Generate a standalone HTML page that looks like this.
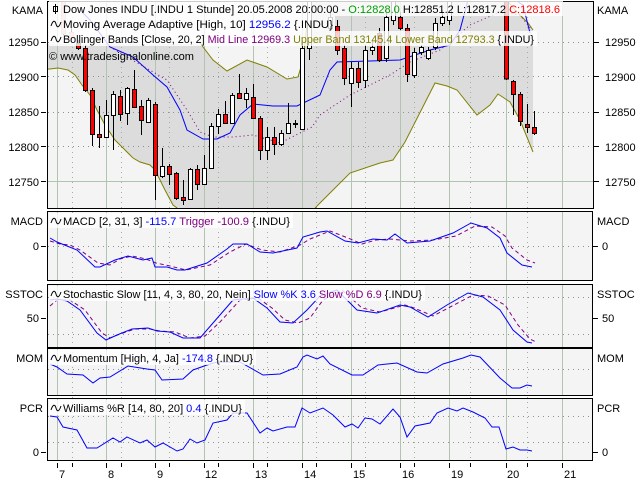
<!DOCTYPE html>
<html><head><meta charset="utf-8"><style>
html,body{margin:0;padding:0;background:#fff;width:640px;height:480px;overflow:hidden}
svg{display:block;font-family:"Liberation Sans",sans-serif;font-size:11px}
</style></head><body>
<svg width="640" height="480" viewBox="0 0 640 480" xmlns="http://www.w3.org/2000/svg">
<defs>
<clipPath id="cm"><rect x="48" y="2" width="545" height="206"/></clipPath>
</defs>
<rect x="47.5" y="1.5" width="546" height="207" fill="#f4f4f4"/>
<rect x="47.5" y="211.5" width="545" height="69" fill="#f4f4f4"/>
<rect x="47.5" y="284.5" width="545" height="63" fill="#f4f4f4"/>
<rect x="47.5" y="348.5" width="545" height="47" fill="#f4f4f4"/>
<rect x="47.5" y="398.5" width="545" height="62" fill="#f4f4f4"/>

<g clip-path="url(#cm)">
<polygon fill="#dcdcdc" points="48,44 200,44 213,60 227,71 247,60 267,67 287,79 298,77 303,60 310,0 500,0 515,10 528,23 533,30 533,152 520,120 510,102 498,94 490,105 477,115 457,90 447,86 435,83 405,142 393,160 380,163 350,173 320,203 313,208 180,208 173,205 165,190 155,170 150,165 140,162 133,158 125,150 115,140 105,125 97,110 90,95 82,85 75,75 68,70 58,68 50,69 48,69"/>
</g>

<g stroke="#b0c4b0" stroke-width="1">
<path d="M57.5 2V208M106.5 2V208M155.5 2V208M204.5 2V208M253.5 2V208M302.5 2V208M351.5 2V208M400.5 2V208M449.5 2V208M506.5 2V208M562.5 2V208"/>
<path d="M57.5 212V280M106.5 212V280M155.5 212V280M204.5 212V280M253.5 212V280M302.5 212V280M351.5 212V280M400.5 212V280M449.5 212V280M506.5 212V280M562.5 212V280"/>
<path d="M57.5 285V347M106.5 285V347M155.5 285V347M204.5 285V347M253.5 285V347M302.5 285V347M351.5 285V347M400.5 285V347M449.5 285V347M506.5 285V347M562.5 285V347"/>
<path d="M57.5 349V395M106.5 349V395M155.5 349V395M204.5 349V395M253.5 349V395M302.5 349V395M351.5 349V395M400.5 349V395M449.5 349V395M506.5 349V395M562.5 349V395"/>
<path d="M57.5 399V460M106.5 399V460M155.5 399V460M204.5 399V460M253.5 399V460M302.5 399V460M351.5 399V460M400.5 399V460M449.5 399V460M506.5 399V460M562.5 399V460"/>
<path d="M48 181.5H593"/>
</g>
<g stroke="#a0b0a0" stroke-width="1" stroke-dasharray="1,4">
<path d="M72.5 2V460M121.5 2V460M169.5 2V460M218.5 2V460M267.5 2V460M316.5 2V460M365.5 2V460M414.5 2V460M470.5 2V460M527.5 2V460"/>
</g>
<g stroke="#909090" stroke-width="1" stroke-dasharray="1,4">
<path d="M48 42.5H593M48 76.5H593M48 112.5H593M48 146.5H593"/>
<path d="M48 246.5H592"/>
<path d="M48 297.5H592M48 334.5H592"/>
<path d="M48 369.5H592"/>
<path d="M48 416.5H592M48 442.5H592"/>
</g>

<g clip-path="url(#cm)">
<polyline fill="none" stroke="#808000" points="48,69 50,69 58,68 68,70 75,75 82,85 90,95 97,110 105,125 115,140 125,150 133,158 140,162 150,165 155,170 165,190 173,205 180,210"/>
<polyline fill="none" stroke="#808000" points="313,210 320,203 350,173 380,163 393,160 405,142 435,83 447,86 457,90 477,115 490,105 498,94 510,102 520,120 533,152"/>
<polyline fill="none" stroke="#808000" points="200,43 213,60 227,71 247,60 267,67 287,79 298,77 303,60 310,-2"/>
<polyline fill="none" stroke="#808000" points="505,-2 515,10 528,23 533,30"/>
<polyline fill="none" stroke="#0000ff" points="80,10 90,20 110,47 133,57 153,75 167,87 180,110 187,130 203,139 217,139 230,133 240,115 253,104 273,106 297,106 320,95 330,70 337,62 400,60 430,50 450,45 460,30 468,0"/>
<polyline fill="none" stroke="#0000ff" points="515,0 523,5 530,33"/>
<polyline fill="none" stroke="#800080" stroke-dasharray="1,3" points="110,47 167,80 187,110 200,132 213,137 233,137 253,135 280,143 300,133 312,127 320,115 350,95 390,75 410,62 440,50 470,25 500,12 520,15 532,30"/>
<g stroke="#000" stroke-width="1">
<path d="M63.5 0V35M71.5 28V40M78.5 40V50M85.5 45V92M92.5 88V146M99.5 106V148M106.5 100V138M113.5 91V150M120.5 90V121M127.5 87V125M134.5 70V108M141.5 100V135M148.5 98V123M155.5 102V200M162.5 148V178M169.5 164V185M176.5 172V200M183.5 180V205M190.5 168V200M197.5 165V190M204.5 155V185M211.5 123V169M218.5 109V134M225.5 101V124M232.5 93V124M239.5 74V99M246.5 88V108M253.5 84V119M260.5 116V160M267.5 127V160M274.5 127V155M281.5 130V146M288.5 103V134M295.5 120V128M302.5 40V130M309.5 0V60M330.5 10V30M337.5 20V55M344.5 45V85M351.5 62V107M358.5 62V88M365.5 45V88M372.5 40V55M379.5 28V62M386.5 10V62M393.5 0V25M400.5 12V30M407.5 24V82M414.5 48V78M421.5 45V55M428.5 47V60M435.5 18V50M442.5 10V26M449.5 0V25M506.5 0V80M513.5 80V115M520.5 92V126M527.5 104V133M534.5 111V135"/>
</g>
<g stroke="#000" stroke-width="1" fill="#ff0000">
<rect x="61.5" y="0.5" width="4" height="33" fill="#ffb0b0" stroke="#c0a0a0"/>
<rect x="69.5" y="32.5" width="4" height="6" fill="#ffb0b0" stroke="#c0a0a0"/>
<rect x="76.5" y="43.5" width="4" height="5"/>
<rect x="83.5" y="48.5" width="4" height="42"/>
<rect x="90.5" y="90.5" width="4" height="44"/>
<rect x="97.5" y="134.5" width="4" height="3"/>
<rect x="104.5" y="115.5" width="4" height="22" fill="#fff"/>
<rect x="111.5" y="94.5" width="4" height="21" fill="#fff"/>
<rect x="118.5" y="96.5" width="4" height="18"/>
<rect x="125.5" y="88.5" width="4" height="25" fill="#fff"/>
<rect x="132.5" y="89.5" width="4" height="18"/>
<rect x="139.5" y="106.5" width="4" height="14"/>
<rect x="146.5" y="100.5" width="4" height="22" fill="#fff"/>
<rect x="153.5" y="104.5" width="4" height="71"/>
<rect x="160.5" y="166.5" width="4" height="10" fill="#fff"/>
<rect x="167.5" y="166.5" width="4" height="8"/>
<rect x="174.5" y="173.5" width="4" height="25"/>
<rect x="181.5" y="197.5" width="4" height="3"/>
<rect x="188.5" y="169.5" width="4" height="30" fill="#fff"/>
<rect x="195.5" y="169.5" width="4" height="15"/>
<rect x="202.5" y="168.5" width="4" height="16" fill="#fff"/>
<rect x="209.5" y="126.5" width="4" height="42" fill="#fff"/>
<rect x="216.5" y="114.5" width="4" height="12" fill="#fff"/>
<rect x="223.5" y="114.5" width="4" height="9"/>
<rect x="230.5" y="95.5" width="4" height="28" fill="#fff"/>
<rect x="237.5" y="93.5" width="4" height="5"/>
<rect x="244.5" y="93.5" width="4" height="6" fill="#fff"/>
<rect x="251.5" y="97.5" width="4" height="21"/>
<rect x="258.5" y="118.5" width="4" height="32"/>
<rect x="265.5" y="137.5" width="4" height="13" fill="#fff"/>
<rect x="272.5" y="137.5" width="4" height="7"/>
<rect x="279.5" y="133.5" width="4" height="11" fill="#fff"/>
<rect x="286.5" y="123.5" width="4" height="10" fill="#fff"/>
<rect x="293.5" y="123.5" width="4" height="1"/>
<rect x="300.5" y="48.5" width="4" height="81" fill="#fff"/>
<rect x="307.5" y="0.5" width="4" height="48" fill="#fff"/>
<rect x="328.5" y="17.5" width="4" height="11" fill="#fff"/>
<rect x="335.5" y="26.5" width="4" height="24"/>
<rect x="342.5" y="48.5" width="4" height="30"/>
<rect x="349.5" y="68.5" width="4" height="15" fill="#fff"/>
<rect x="356.5" y="68.5" width="4" height="14"/>
<rect x="363.5" y="50.5" width="4" height="30" fill="#fff"/>
<rect x="370.5" y="47.5" width="4" height="3" fill="#fff"/>
<rect x="377.5" y="33.5" width="4" height="27"/>
<rect x="384.5" y="17.5" width="4" height="41" fill="#fff"/>
<rect x="391.5" y="0.5" width="4" height="20" fill="#fff"/>
<rect x="398.5" y="17.5" width="4" height="11"/>
<rect x="405.5" y="28.5" width="4" height="46"/>
<rect x="412.5" y="52.5" width="4" height="23" fill="#fff"/>
<rect x="419.5" y="47.5" width="4" height="5" fill="#fff"/>
<rect x="426.5" y="50.5" width="4" height="8" fill="#fff"/>
<rect x="433.5" y="23.5" width="4" height="24" fill="#fff"/>
<rect x="440.5" y="17.5" width="4" height="6" fill="#fff"/>
<rect x="447.5" y="0.5" width="4" height="20" fill="#fff"/>
<rect x="504.5" y="-1" width="4" height="80"/>
<rect x="511.5" y="81.5" width="4" height="13"/>
<rect x="518.5" y="94.5" width="4" height="27"/>
<rect x="525.5" y="124.5" width="4" height="3"/>
<rect x="532.5" y="127.5" width="4" height="6"/>
</g>
</g>

<g fill="none" stroke-width="1">
<polyline stroke="#800080" stroke-dasharray="4,3" points="50,241 60,244 70,245 80,250 98,263 110,265 120,259 132,256 146,259 156,263 170,266 186,270 210,265 230,252 246,244 262,250 280,252 300,245 310,239 330,231 348,238 362,244 376,240 390,239 410,241 433,240 456,236 475,226 492,227 505,236 512,248 527,260 535,263"/>
<polyline stroke="#0000ff" points="50,238 57,242 67,246 77,250 95,267 100,267 115,260 128,256 143,260 152,258 155,267 167,267 177,270 185,270 207,263 227,249 233,244 247,244 260,252 273,253 297,248 303,237 320,232 327,231 345,241 358,243 373,239 387,240 395,234 407,243 430,241 453,233 471,223 487,228 500,238 507,253 522,265 532,267"/>
<polyline stroke="#800080" stroke-dasharray="4,3" points="50,306 57,300 70,300 85,310 102,333 110,338 120,334 135,329 150,329 160,331 175,332 190,338 205,336 220,322 240,300 258,298 272,308 285,320 298,323 310,318 323,300 342,290 362,308 380,312 405,305 414,308 433,316 452,306 473,295 488,296 505,305 518,325 530,339 536,342"/>
<polyline stroke="#0000ff" points="50,300 57,299 67,301 80,310 97,333 106,340 117,335 132,329 148,328 157,331 170,332 183,338 200,338 213,323 233,300 253,298 267,308 280,322 293,323 307,310 320,296 337,290 357,310 377,313 400,305 410,307 428,317 447,305 468,293 483,297 500,310 513,330 527,342 532,343"/>
<polyline stroke="#0000ff" points="50,364 57,367 67,374 83,375 93,383 100,378 110,377 128,366 147,369 155,370 162,380 183,379 193,370 207,365 217,362 240,362 263,375 280,374 297,367 303,357 307,355 317,359 323,356 330,364 352,375 363,375 378,365 397,363 417,372 427,373 443,364 463,358 471,355 480,357 500,378 512,388 520,388 527,385 532,386"/>
<polyline stroke="#0000ff" points="50,416 57,417 63,427 77,430 87,448 97,448 113,438 120,442 127,437 140,443 147,440 155,447 163,443 177,451 183,449 190,439 197,443 205,440 213,423 227,420 233,413 247,413 260,433 267,428 273,431 287,427 295,427 302,408 310,413 323,408 333,415 345,427 352,424 358,428 365,418 372,419 380,424 393,409 400,417 407,437 415,426 430,423 437,413 448,408 457,411 463,408 473,412 485,418 492,427 499,427 506,449 513,447 520,450 527,450 532,451"/>
</g>

<g fill="none" stroke="#000" stroke-width="1">
<rect x="47.5" y="1.5" width="546" height="207"/>
<rect x="47.5" y="211.5" width="545" height="69"/>
<rect x="47.5" y="284.5" width="545" height="63"/>
<rect x="47.5" y="348.5" width="545" height="47"/>
<rect x="47.5" y="398.5" width="545" height="62"/>
</g>

<g fill="#fff" fill-opacity="0.8">
<rect x="49" y="1" width="514" height="15"/>
<rect x="49" y="16" width="286" height="15"/>
<rect x="49" y="31" width="488" height="15"/>
<rect x="49" y="213" width="244" height="15"/>
<rect x="49" y="286" width="376" height="15"/>
<rect x="49" y="350" width="207" height="15"/>
<rect x="49" y="400" width="196" height="15"/>
</g>
<g stroke="#000" fill="none" stroke-width="1">
<path d="M55.5 4V14M53.5 6.5h4v5h-4z" fill="#fff"/>
<path d="M51 26c2-6 4-6 5-2s3 4 5-2"/>
<path d="M51 41c2-6 4-6 5-2s3 4 5-2"/>
<path d="M51 223c2-6 4-6 5-2s3 4 5-2"/>
<path d="M51 296c2-6 4-6 5-2s3 4 5-2"/>
<path d="M51 360c2-6 4-6 5-2s3 4 5-2"/>
<path d="M51 410c2-6 4-6 5-2s3 4 5-2"/>
</g>
<g fill="#000">
<text x="63" y="13" textLength="497" lengthAdjust="spacingAndGlyphs">Dow Jones INDU [.INDU  1 Stunde] 20.05.2008 20:00:00 - <tspan fill="#00a000">O:12828.0</tspan> H:12851.2 L:12817.2 <tspan fill="#ff0000">C:12818.6</tspan></text>
<text x="63" y="28" textLength="270" lengthAdjust="spacingAndGlyphs">Moving Average Adaptive [High, 10] <tspan fill="#0000ff">12956.2</tspan> {.INDU}</text>
<text x="63" y="43" textLength="471" lengthAdjust="spacingAndGlyphs">Bollinger Bands [Close, 20, 2] <tspan fill="#800080">Mid Line 12969.3</tspan> <tspan fill="#808000">Upper Band 13145.4 Lower Band 12793.3</tspan> {.INDU}</text>
<text x="49" y="60" textLength="145" lengthAdjust="spacingAndGlyphs">© www.tradesignalonline.com</text>
<text x="63" y="225" textLength="227" lengthAdjust="spacingAndGlyphs">MACD [2, 31, 3] <tspan fill="#0000ff">-115.7</tspan> <tspan fill="#800080">Trigger -100.9</tspan> {.INDU}</text>
<text x="63" y="298" textLength="359" lengthAdjust="spacingAndGlyphs">Stochastic Slow [11, 4, 3, 80, 20, Nein] <tspan fill="#0000ff">Slow %K 3.6</tspan> <tspan fill="#800080">Slow %D 6.9</tspan> {.INDU}</text>
<text x="63" y="362" textLength="190" lengthAdjust="spacingAndGlyphs">Momentum [High, 4, Ja] <tspan fill="#0000ff">-174.8</tspan> {.INDU}</text>
<text x="63" y="412" textLength="179" lengthAdjust="spacingAndGlyphs">Williams %R [14, 80, 20] <tspan fill="#0000ff">0.4</tspan> {.INDU}</text>
</g>

<g fill="#000" font-size="11">
<text x="43" y="14" text-anchor="end">KAMA</text>
<text x="597" y="14">KAMA</text>
<g text-anchor="end">
<text x="39" y="46">12950</text><text x="39" y="81">12900</text><text x="39" y="116">12850</text><text x="39" y="151">12800</text><text x="39" y="186">12750</text>
<text x="43" y="225">MACD</text><text x="39" y="250">0</text>
<text x="43" y="298">SSTOC</text><text x="39" y="322">50</text>
<text x="43" y="362">MOM</text>
<text x="43" y="412">PCR</text><text x="39" y="456">0</text>
</g>
<text x="605" y="46">12950</text><text x="605" y="81">12900</text><text x="605" y="116">12850</text><text x="605" y="151">12800</text><text x="605" y="186">12750</text>
<text x="597" y="225">MACD</text><text x="602" y="250">0</text>
<text x="597" y="298">SSTOC</text><text x="602" y="322">50</text>
<text x="597" y="362">MOM</text>
<text x="597" y="412">PCR</text><text x="602" y="456">0</text>
</g>
<g stroke="#000" stroke-width="1">
<path d="M41 42.5h5M41 76.5h5M41 112.5h5M41 146.5h5M41 181.5h5M41 246.5h5M41 318.5h5M41 452.5h5"/>
<path d="M594 42.5h5M594 76.5h5M594 112.5h5M594 146.5h5M594 181.5h5M593 246.5h5M593 318.5h5M593 452.5h5"/>
<path d="M57.5 463v5M72.5 463v4M106.5 463v5M121.5 463v4M155.5 463v5M169.5 463v4M204.5 463v5M218.5 463v4M253.5 463v5M267.5 463v4M302.5 463v5M316.5 463v4M351.5 463v5M365.5 463v4M400.5 463v5M414.5 463v4M449.5 463v5M470.5 463v4M506.5 463v5M527.5 463v4M562.5 463v5"/>
</g>
<g fill="#000">
<text x="59" y="478">7</text><text x="108" y="478">8</text><text x="157" y="478">9</text><text x="205" y="478">12</text><text x="255" y="478">13</text><text x="304" y="478">14</text><text x="353" y="478">15</text><text x="402" y="478">16</text><text x="451" y="478">19</text><text x="507" y="478">20</text><text x="564" y="478">21</text>
</g>
</svg>
</body></html>
